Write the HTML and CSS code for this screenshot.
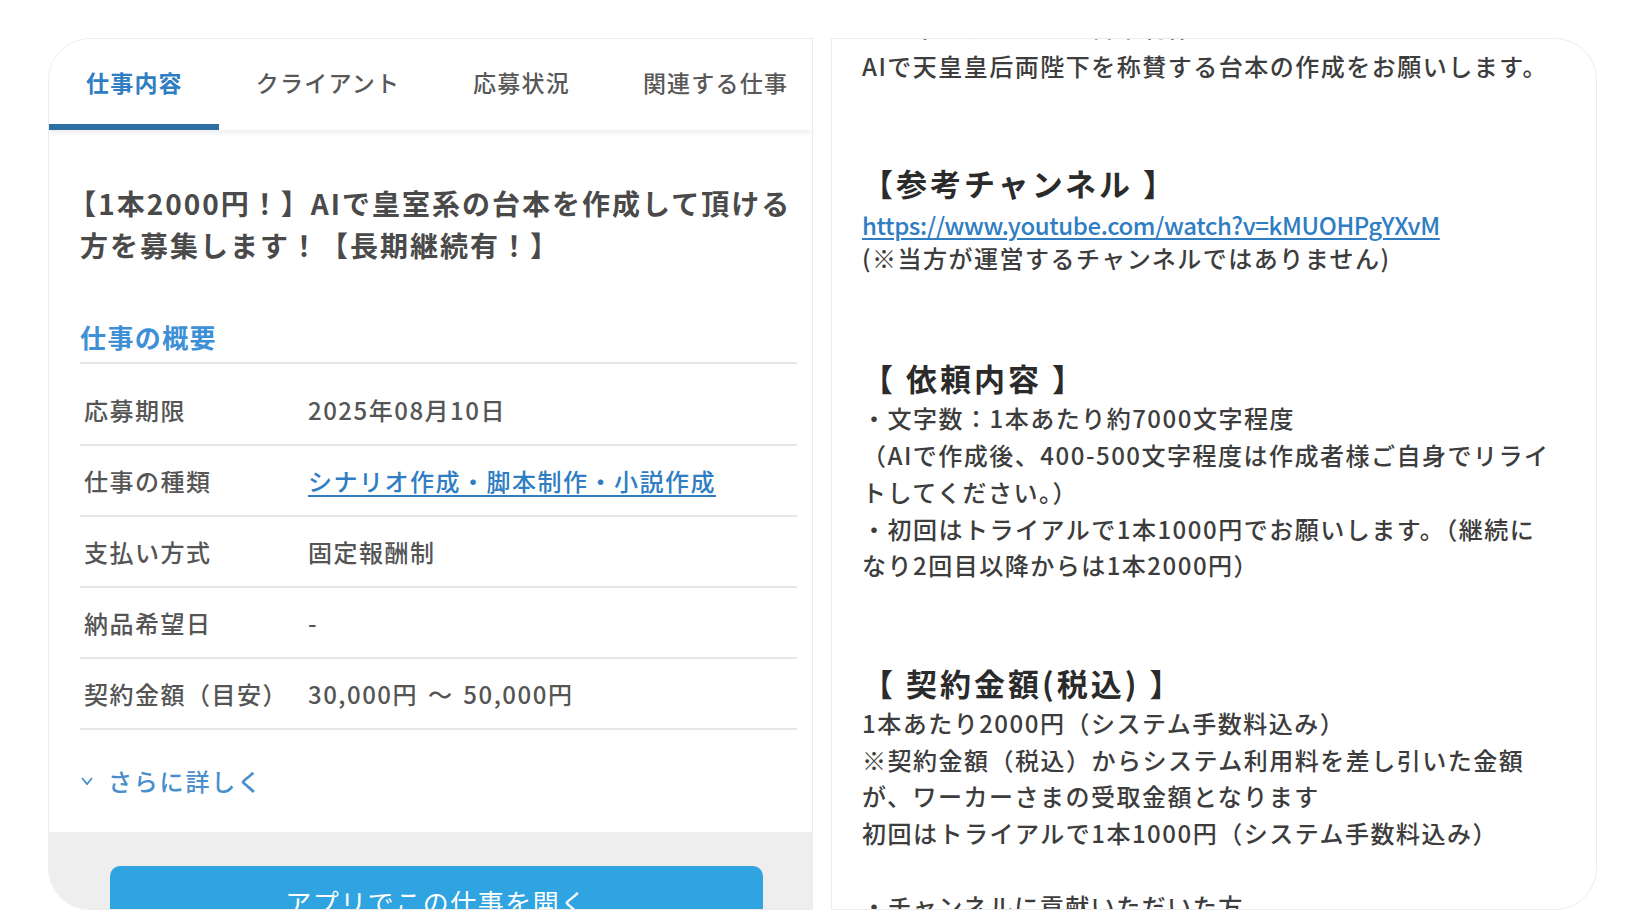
FILE: index.html
```html
<!DOCTYPE html>
<html lang="ja">
<head>
  <meta charset="UTF-8" />
  <title>仕事詳細</title>
  <link rel="stylesheet" href="styles.css">
</head>
<body>

  <div class="media">

    <!-- job page: tabs, title, summary table, app button -->
    <section class="shot job">
      <nav class="tabs">
        <span class="tab active">仕事内容</span>
        <span class="tab">クライアント</span>
        <span class="tab">応募状況</span>
        <span class="tab">関連する仕事</span>
      </nav>

      <div class="job-body">
        <h1 class="job-title">【1本2000円！】AIで皇室系の台本を作成して頂ける<br>方を募集します！【長期継続有！】</h1>

        <h2 class="summary-head">仕事の概要</h2>
        <dl class="summary">
          <div class="row"><dt>応募期限</dt><dd>2025年08月10日</dd></div>
          <div class="row"><dt>仕事の種類</dt><dd><a href="#">シナリオ作成・脚本制作・小説作成</a></dd></div>
          <div class="row"><dt>支払い方式</dt><dd>固定報酬制</dd></div>
          <div class="row"><dt>納品希望日</dt><dd>-</dd></div>
          <div class="row"><dt>契約金額（目安）</dt><dd>30,000円 ～ 50,000円</dd></div>
        </dl>

        <a class="more" href="#">
          <svg width="14" height="10" viewBox="0 0 14 10"><polyline points="2,2 7,8 12,2" fill="none" stroke="currentColor" stroke-width="1.8"/></svg>
          さらに詳しく
        </a>
      </div>

      <div class="app-bar">
        <button class="app-btn">アプリでこの仕事を開く</button>
      </div>
    </section>

    <!-- job description text -->
    <section class="shot detail">
      <p class="lines cut">皇室系チャンネルの台本制作</p>
      <p class="lines lead">AIで天皇皇后両陛下を称賛する台本の作成をお願いします。</p>

      <h3 class="sec">【参考チャンネル 】</h3>
      <p class="ref">
        <a href="#">https://www.youtube.com/watch?v=kMUOHPgYXvM</a><br>
        (※当方が運営するチャンネルではありません)
      </p>

      <h3 class="sec sec-wide">【 依頼内容 】</h3>
      <p class="lines">・文字数：1本あたり約7000文字程度<br>（AIで作成後、400-500文字程度は作成者様ご自身でリライ<br>トしてください。）<br>・初回はトライアルで1本1000円でお願いします。（継続に<br>なり2回目以降からは1本2000円）</p>

      <h3 class="sec">【 契約金額(税込) 】</h3>
      <p class="lines">1本あたり2000円（システム手数料込み）<br>※契約金額（税込）からシステム利用料を差し引いた金額<br>が、ワーカーさまの受取金額となります<br>初回はトライアルで1本1000円（システム手数料込み）<br><br>・チャンネルに貢献いただいた方</p>
    </section>

  </div>

</body>
</html>
```

FILE: styles.css
```css
:root {
  --text: #474747;
  --text-dark: #2b2b2b;
  --blue: #2f7dc2;
  --blue-head: #3d8fd6;
  --tab-line: #2b6fa3;
  --rule: #e7e7e7;
  --frame: #ececec;
  --bar: #eeeeee;
  --btn: #2fa4e0;
}
* { box-sizing: border-box; margin: 0; padding: 0; }
body {
  background: #fff;
  font-family: "Noto Sans CJK JP", "Noto Sans", sans-serif;
  color: var(--text);
  padding: 38px 0 0 48px;
}
a { color: var(--blue); }

.media {
  display: grid;
  grid-template-columns: 765px 766px;
  column-gap: 18px;
  width: 1549px;
  height: 872px;
}
.shot {
  background: #fff;
  border: 1px solid var(--frame);
  overflow: hidden;
  white-space: nowrap;
}
.job {
  border-radius: 42px 0 0 42px;
  display: flex;
  flex-direction: column;
}
.detail {
  border-radius: 0 42px 42px 0;
  padding: 0 20px 0 30px;
}

/* tab bar */
.tabs {
  display: flex;
  flex: none;
  height: 91px;
  overflow: hidden;
  background: #fff;
  box-shadow: 0 3px 5px rgba(0,0,0,0.07);
  position: relative;
  z-index: 1;
}
.tab {
  flex: none;
  display: flex;
  align-items: center;
  padding: 0 36px 0 37px;
  font-size: 23px;
  font-weight: 500;
  letter-spacing: 1.2px;
  color: #585858;
  border-bottom: 6px solid transparent;
}
.tab.active {
  color: var(--blue);
  font-weight: 700;
  border-bottom-color: var(--tab-line);
}

/* job summary */
.job-body {
  padding: 52px 15px 33px 31px;
}
.job-title {
  font-size: 28px;
  font-weight: 700;
  letter-spacing: 2px;
  line-height: 42px;
  color: #4a4a4a;
  text-indent: -0.42em;
}
.summary-head {
  margin-top: 53px;
  padding-bottom: 7px;
  border-bottom: 2px solid var(--rule);
  font-size: 26px;
  font-weight: 700;
  letter-spacing: 1.4px;
  line-height: 36px;
  color: var(--blue-head);
}
.summary { margin-top: 11px; }
.row {
  display: flex;
  align-items: center;
  height: 71px;
  border-bottom: 2px solid var(--rule);
  font-size: 24px;
  font-weight: 500;
  letter-spacing: 1.5px;
}
.row dt {
  width: 228px;
  padding-left: 4px;
  color: #555;
}
.row dd { color: #555; word-spacing: 3px; }
.row a { text-underline-offset: 4px; }

.more {
  display: flex;
  align-items: center;
  gap: 14px;
  margin-top: 33px;
  font-size: 24px;
  font-weight: 500;
  letter-spacing: 1.8px;
  line-height: 36px;
  color: #4a8fcc;
  text-decoration: none;
}

.app-bar {
  flex: 1;
  background: var(--bar);
  padding: 34px 49px 0 61px;
}
.app-btn {
  display: block;
  width: 100%;
  padding: 20px 0;
  border: none;
  border-radius: 10px;
  background: var(--btn);
  color: #fff;
  font-family: inherit;
  font-size: 26px;
  letter-spacing: 1.5px;
  line-height: 32px;
}

/* description text */
.lines, .ref {
  font-size: 24px;
  font-weight: 500;
  letter-spacing: 1.5px;
  line-height: 36.7px;
  color: #3d3d3d;
}
.lines.cut { margin-top: -30px; }
.lines.lead { margin-top: 2px; }
.sec {
  margin-top: 77px;
  font-size: 31px;
  font-weight: 700;
  letter-spacing: 3px;
  line-height: 44px;
  color: var(--text-dark);
}
.sec-wide { margin-top: 82px; }
.ref {
  margin-top: 3px;
  line-height: 33px;
}
.ref a {
  letter-spacing: -0.4px;
  text-underline-offset: 3px;
}
```
